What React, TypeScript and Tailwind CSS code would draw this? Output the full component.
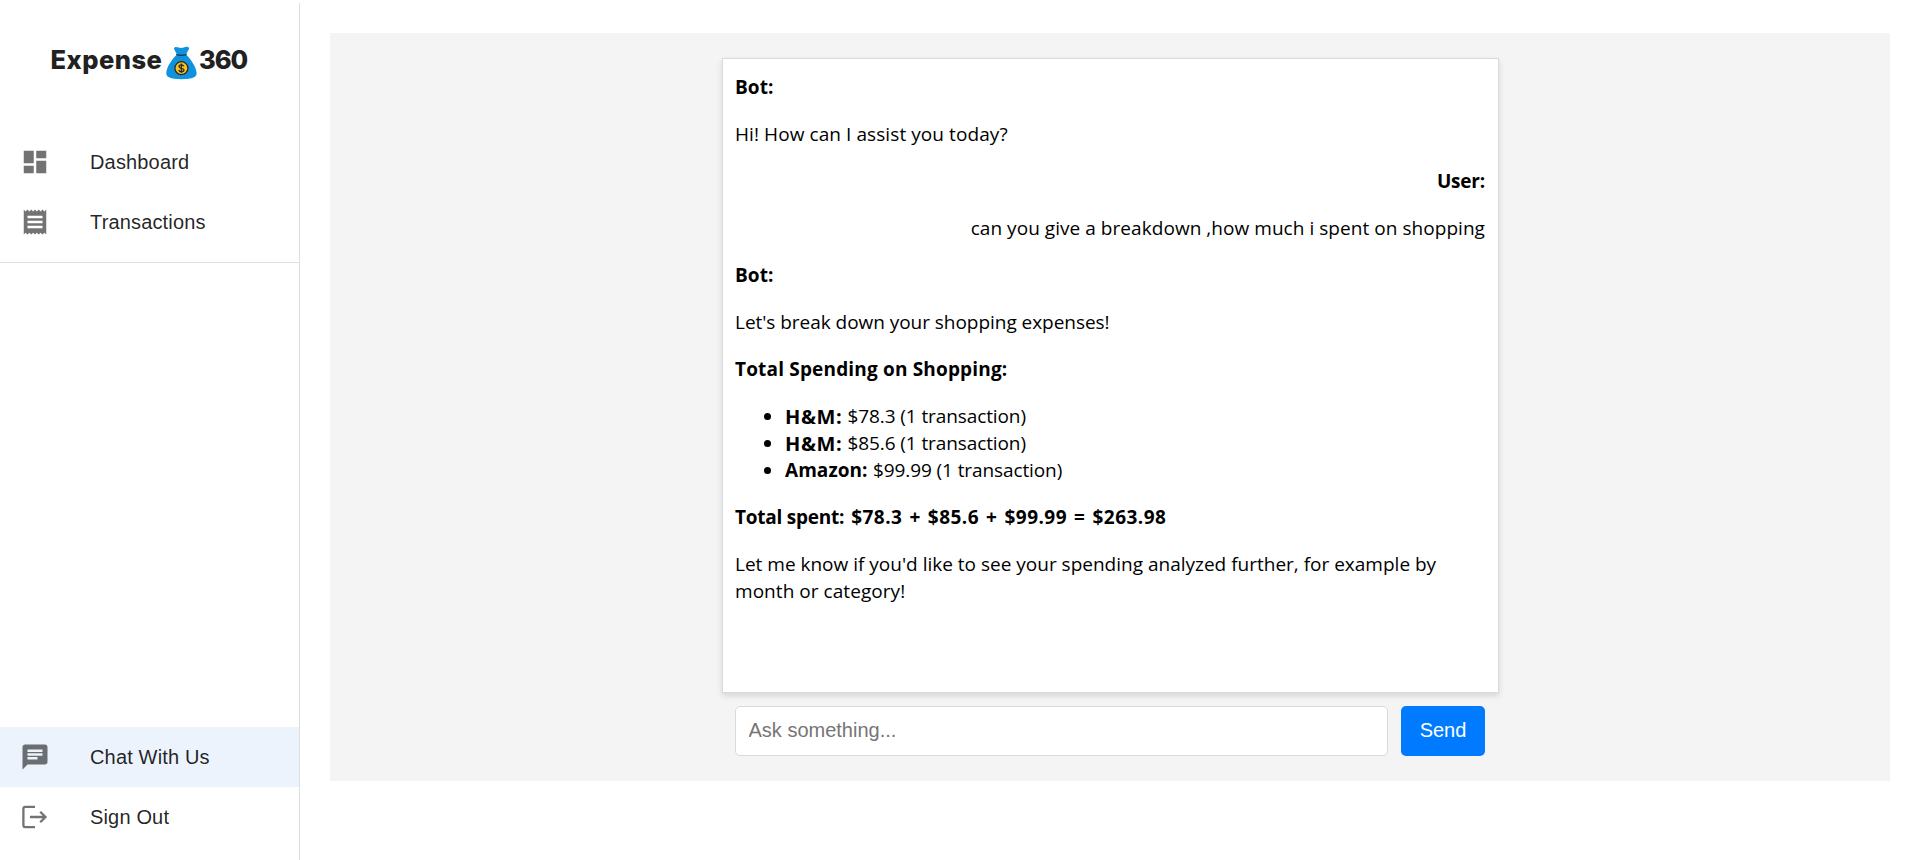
import type { ReactNode } from "react";
import { MdChat, MdDashboard, MdReceipt } from "react-icons/md";

function SignOutIcon() {
  return (
    <svg width="30" height="30" viewBox="0 0 30 30" fill="none" stroke="currentColor" strokeWidth="2.3">
      <path d="M15 4.9H5.3c-1.1 0-1.9.8-1.9 1.9v16.4c0 1.1.8 1.9 1.9 1.9H15" />
      <path d="M10 15h15.6M20.2 9.7l5.3 5.3-5.3 5.3" />
    </svg>
  );
}

function MoneyBag() {
  return (
    <svg className="mx-[2px] mt-[2px] shrink-0" width="33" height="34" viewBox="0 0 33 34">
      <path
        d="M9.6 1.4c1.2-.9 2.6-.4 4 .1 1.8.6 3.4.5 5.2-.1 1.5-.6 3.2-.9 4.6-.2.9.5.8 1.3.3 2.2L21 8.6c4.5 4.5 10 11.8 10.6 18.2.4 4.3-3.7 6.4-15.1 6.4S.9 31.1 1.3 26.8C1.9 20.4 7.3 13.1 12 8.6L9.3 3.4c-.4-.8-.4-1.5.3-2z"
        fill="#1192df"
      />
      <path d="M11.7 8.7c3 .8 6.4.8 9.5 0" fill="none" stroke="#1b3a55" strokeWidth="1.3" strokeLinecap="round" />
      <circle cx="16.4" cy="22.2" r="6.5" fill="#f8c51c" stroke="#2b2a26" strokeWidth="1.3" />
      <path
        d="M18.8 20.3c-.3-1-1.2-1.5-2.4-1.5-1.4 0-2.4.7-2.4 1.7 0 2.5 5 1.1 5 3.5 0 1.1-1.1 1.7-2.5 1.7-1.4 0-2.4-.6-2.7-1.7M16.4 17.4v9.6"
        fill="none"
        stroke="#2b2a26"
        strokeWidth="1.3"
      />
    </svg>
  );
}

function NavItem({ icon, label, active = false }: { icon: ReactNode; label: string; active?: boolean }) {
  return (
    <a className={`flex h-[60px] items-center pl-5 ${active ? "bg-[#ecf3fc]" : ""}`}>
      <span className="w-[70px] text-[30px] text-black/55">{icon}</span>
      <span className="text-[20px] leading-[30px] tracking-[0.16px] text-black/87">{label}</span>
    </a>
  );
}

function Entry({ name, amount, nameClass }: { name: string; amount: string; nameClass: string }) {
  return (
    <li className="flex items-center">
      <span className="mr-[14px] ml-[28.5px] size-[7.5px] rounded-full bg-black" />
      <b className={nameClass}>{name}</b>
      <span className="tracking-[-0.1px]">{amount}</span>
    </li>
  );
}

export default function App() {
  return (
    <div className="flex h-[860px] w-full overflow-hidden bg-white pt-[3px] font-['Liberation_Sans',Arial,sans-serif]">
      <aside className="flex w-[300px] shrink-0 flex-col border-r border-[#dedede] pb-[13px]">
        <div className="flex h-[129px] items-start pt-[41px] pl-[50.5px] font-[Inter,sans-serif] text-[25.5px] leading-[32px] font-extrabold text-[#212121]">
          <span className="w-[112.5px] tracking-[0.5px]">Expense</span>
          <MoneyBag />
          <span className="-ml-px tracking-[-1.1px]">360</span>
        </div>
        <nav className="border-b border-[#e0e0e0] pb-[10px]">
          <NavItem icon={<MdDashboard />} label="Dashboard" />
          <NavItem icon={<MdReceipt />} label="Transactions" />
        </nav>
        <nav className="mt-auto">
          <NavItem icon={<MdChat />} label="Chat With Us" active />
          <NavItem icon={<SignOutIcon />} label="Sign Out" />
        </nav>
      </aside>

      <main className="flex-1 pt-[30px] pr-7 pl-[30px]">
        <section className="flex h-[748px] flex-col items-center bg-[#f4f4f4] pt-[25px]">
          <div className="flex h-[635px] w-[777px] flex-col gap-5 border border-[#dadada] bg-white px-[12.5px] pt-[15px] font-['Open_Sans',sans-serif] text-[19px] leading-[27px] whitespace-nowrap text-black shadow-[0_2.5px_6px_rgba(0,0,0,0.12)]">
            <b className="tracking-[0.1px]">Bot:</b>
            <p className="tracking-[0.08px]">Hi! How can I assist you today?</p>
            <b className="text-right tracking-[-0.2px]">User:</b>
            <p className="text-right tracking-[0.05px]">can you give a breakdown ,how much i spent on shopping</p>
            <b className="tracking-[0.1px]">Bot:</b>
            <p className="tracking-[-0.04px]">Let's break down your shopping expenses!</p>
            <b className="tracking-[0.17px]">Total Spending on Shopping:</b>
            <ul>
              <Entry name="H&M:" amount="$78.3 (1 transaction)" nameClass="w-[62.5px] text-[20px] tracking-[0.6px]" />
              <Entry name="H&M:" amount="$85.6 (1 transaction)" nameClass="w-[62.5px] text-[20px] tracking-[0.6px]" />
              <Entry name="Amazon:" amount="$99.99 (1 transaction)" nameClass="w-[88px] tracking-[0.05px]" />
            </ul>
            <b>
              <span className="tracking-[-0.25px]">Total spent:</span>
              <span className="tracking-[0.47px] [word-spacing:1.65px]"> $78.3 + $85.6 + $99.99 = $263.98</span>
            </b>
            <p>
              Let me know if you'd like to see your spending analyzed further, for example by
              <br />
              <span className="tracking-[0.05px]">month or category!</span>
            </p>
          </div>
          <form className="mt-[13px] flex h-[50px] w-[750px] gap-[13px]">
            <input
              className="w-[653px] rounded-[5px] border border-[#dadada] bg-white px-[12.5px] pb-[2px] text-[20px] text-black placeholder-[#757575] outline-none"
              placeholder="Ask something..."
            />
            <button type="button" className="flex-1 rounded-[5px] bg-[#007bff] pb-[2px] text-[20px] text-white">
              Send
            </button>
          </form>
        </section>
      </main>
    </div>
  );
}
